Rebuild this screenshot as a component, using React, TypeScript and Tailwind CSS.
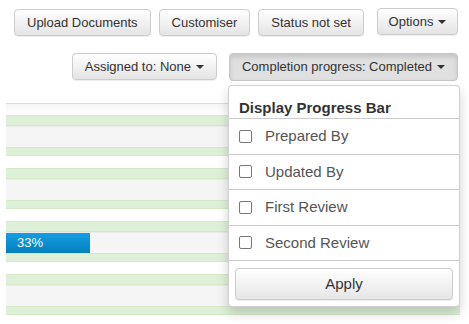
import React from "react";

const btn =
  "flex items-center h-[27px] px-3 text-[13px] text-[#333] border border-[#ccc] rounded-[4px] bg-linear-to-b from-white to-[#e4e4e4] shadow-[0_1px_1px_rgba(0,0,0,0.075)]";

function Caret() {
  return <span className="ml-[5px] inline-block w-0 h-0 border-x-4 border-t-4 border-x-transparent border-t-[#333]" />;
}

function Stripe() {
  return (
    <>
      <div className="h-[11px] bg-[#dff0d8] border-y border-[#d6e9c6]" />
      <div className="h-[21px] bg-[#f5f5f5] border-t border-[#ececec]" />
      <div className="h-[9px] bg-[#dff0d8] border-y border-[#d6e9c6]" />
      <div className="h-[12px] bg-white" />
    </>
  );
}

const options = ["Prepared By", "Updated By", "First Review", "Second Review"];

export default function App() {
  return (
    <div className="w-[469px] h-[324px] overflow-hidden bg-white font-['Liberation_Sans',Arial,sans-serif]">
      <div className="flex items-start justify-between pt-2 pl-[14px] pr-[11px]">
        <div className="flex gap-2 mt-px">
          <button className={btn}>Upload Documents</button>
          <button className={btn}>Customiser</button>
          <button className={btn}>Status not set</button>
        </div>
        <button className={btn + " w-[81px] justify-center"}>
          Options
          <Caret />
        </button>
      </div>

      <div className="flex justify-end gap-3 mt-[17px] pr-[11px]">
        <button className={btn}>
          Assigned to: None
          <Caret />
        </button>
        <div className="relative">
          <button className="flex items-center h-[28px] px-3 text-[13px] text-[#333] border border-[#c6c6c6] rounded-[4px] bg-[#e0e0e0] shadow-[inset_0_3px_5px_rgba(0,0,0,0.125)]">
            Completion progress: Completed
            <Caret />
          </button>
          <div className="absolute z-10 top-full mt-1 -right-[2px] w-[232px] bg-white border border-[rgba(0,0,0,0.18)] rounded-[4px] shadow-[0_6px_12px_rgba(0,0,0,0.175)]">
            <div className="h-[33px] pl-[10px] pt-[13px] text-[15px] leading-[17px] font-bold text-[#333] border-b border-[#ccc]">
              Display Progress Bar
            </div>
            {options.map((o) => (
              <div key={o} className="flex items-center h-[35.5px] pl-[10px] border-b border-[#ccc]">
                <span className="w-[13px] h-[13px] border border-[#777] rounded-[2px] bg-white" />
                <span className="ml-[13px] text-[15px] text-[#555]">{o}</span>
              </div>
            ))}
            <div className="px-[6px] pt-[7px] pb-[6px]">
              <button className="w-full h-[32px] text-[15px] text-[#333] border border-[#ccc] rounded-[4px] bg-linear-to-b from-white to-[#e6e6e6] shadow-[0_1px_1px_rgba(0,0,0,0.075)]">
                Apply
              </button>
            </div>
          </div>
        </div>
      </div>

      <div className="mt-[22px] ml-[6px] mr-[9px] border-t border-[#ddd]">
        <div className="h-[11px] bg-linear-to-b from-[#f6f6f6] to-white" />
        <Stripe />
        <Stripe />
        <div className="h-[11px] bg-[#dff0d8] border-y border-[#d6e9c6]" />
        <div className="h-[21px] bg-[#f5f5f5] border-t border-[#ececec]">
          <div className="w-[84px] h-full flex items-center pl-[11px] text-[13px] text-white bg-linear-to-b from-[#149ee2] to-[#0580bf]">
            33%
          </div>
        </div>
        <div className="h-[9px] bg-[#dff0d8] border-y border-[#d6e9c6]" />
        <div className="h-[12px] bg-white" />
        <Stripe />
      </div>
    </div>
  );
}
